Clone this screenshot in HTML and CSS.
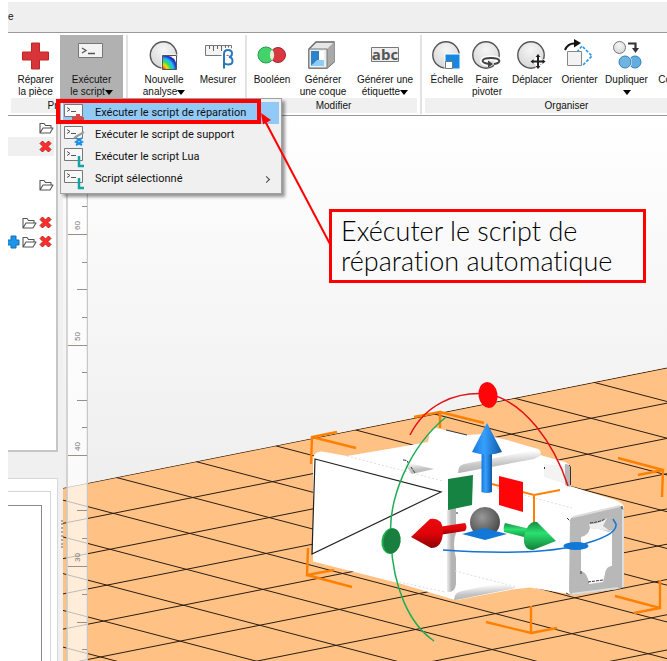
FILE: index.html
```html
<!DOCTYPE html>
<html lang="fr">
<head>
<meta charset="utf-8">
<title>Préparation de pièce</title>
<link rel="stylesheet" href="styles.css">
</head>
<body>
<div class="app">
  <header class="titlebar">e</header>

  <nav class="ribbon" aria-label="Outils">
    <section class="group group-prepare">
      <div class="tools">
        <button class="tool" type="button">
          <svg class="icon" viewBox="0 0 32 32"><path d="M11.500 2h8v9h9v8h-9v9h-8v-9h-9v-8h9z" fill="#d93437" stroke="#b8282b"/></svg>
          <span>Réparer<br>la pièce</span>
        </button>
        <button class="tool active" type="button" aria-expanded="true">
          <svg class="icon" viewBox="0 0 32 32"><path d="M2.500 2.500h24v14h-24z" fill="#f3f3f3" stroke="#777"/><path d="M6 7l4 2.500L6 12M12 12.500h7" fill="none" stroke="#555" stroke-width="1.300"/></svg>
          <span>Exécuter<br>le script<i class="caret"></i></span>
        </button>
      </div>
      <h2 class="group-label">Préparer</h2>
    </section>
    <section class="group group-analyse">
      <div class="tools">
        <button class="tool" type="button">
          <svg class="icon" viewBox="0 0 32 32"><defs><radialGradient id="ball" cx=".5" cy=".3" r=".8"><stop offset="0" stop-color="#f6f6f6"/><stop offset="1" stop-color="#d2d2d2"/></radialGradient><radialGradient id="fan" cx="0" cy="1" r="1.100"><stop offset=".1" stop-color="#f42"/><stop offset=".3" stop-color="#fd0"/><stop offset=".5" stop-color="#3d5"/><stop offset=".7" stop-color="#2bf"/><stop offset=".9" stop-color="#23b"/></radialGradient></defs><circle cx="15.500" cy="14" r="13.200" fill="url(#ball)" stroke="#555" stroke-width="1.400"/><path d="M14.500 14.500h14v14h-14z" fill="#fff" stroke="#fff" stroke-width="2"/><path d="M14.500 28.500v-14h4q9 1 10 10v4z" fill="url(#fan)"/><path d="M14.500 14.500h14v14h-14z" fill="none" stroke="#555"/></svg>
          <span>Nouvelle<br>analyse<i class="caret"></i></span>
        </button>
        <button class="tool" type="button">
          <svg class="icon" viewBox="0 0 32 32"><path d="M3.500 4.500h26v10h-26z" fill="#f3f3f3" stroke="#777"/><path d="M7.500 5v3M11.500 5v5M15.500 5v3M19.500 5v5M23.500 5v3M26.500 5v4" stroke="#666"/><path d="M22 27.500V13q0-4 4-4t4 3.500q0 3-3 3.500 3.500.5 3.500 4t-4.500 3.500q-2.500 0-4-1.500" fill="none" stroke="#fff" stroke-width="5"/><path d="M22 27.500V13q0-4 4-4t4 3.500q0 3-3 3.500 3.500.5 3.500 4t-4.500 3.500q-2.500 0-4-1.500" fill="none" stroke="#2b78b8" stroke-width="2"/></svg>
          <span>Mesurer</span>
        </button>
      </div>
      <div class="group-label"></div>
    </section>
    <section class="group group-modify">
      <div class="tools">
        <button class="tool" type="button">
          <svg class="icon" viewBox="0 0 32 32"><circle cx="22" cy="14" r="7.500" fill="#d93840" stroke="#a8282f"/><circle cx="10" cy="14" r="8" fill="#43d36b" stroke="#2a9a4b"/><path d="M16 8.500a8 8 0 0 1 0 11 8 8 0 0 1 0-11" fill="#efe9d5"/></svg>
          <span>Booléen</span>
        </button>
        <button class="tool" type="button">
          <svg class="icon" viewBox="0 0 32 32"><path d="M2 8l7-7h18v20l-7 6H2z" fill="#e6e6e6" stroke="#666" stroke-width="1.400"/><path d="M20 8l7-7v20l-7 6z" fill="#a9a9a9"/><path d="M2 8h18v19H2z" fill="#ededed" stroke="#777"/><path d="M4 10h13v15H4z" fill="#fff"/><path d="M4 10h8v9l-8 6z" fill="#2f83c7"/><path d="M4 25l6-6h7v6z" fill="#8dccfb"/></svg>
          <span>Générer<br>une coque</span>
        </button>
        <button class="tool" type="button">
          <svg class="icon" viewBox="0 0 32 32"><path d="M2.500 6.500h27v14h-27z" fill="#eee" stroke="#777"/><text class="abc" x="16" y="19" text-anchor="middle">abc</text></svg>
          <span>Générer une<br>étiquette<i class="caret"></i></span>
        </button>
      </div>
      <h2 class="group-label">Modifier</h2>
    </section>
    <section class="group group-arrange">
      <div class="tools">
        <button class="tool" type="button">
          <svg class="icon" viewBox="0 0 32 32"><circle cx="15" cy="14" r="13.200" fill="url(#ball)" stroke="#555" stroke-width="1.400"/><path d="M14 13h15v15H14z" fill="#1688e0" stroke="#fff"/><path d="M14.500 20.500h7v7h-7z" fill="#fff" stroke="#777"/></svg>
          <span>Échelle</span>
        </button>
        <button class="tool" type="button">
          <svg class="icon" viewBox="0 0 32 32"><circle cx="15" cy="14" r="13.200" fill="url(#ball)" stroke="#555" stroke-width="1.400"/><path d="M17 23c-8-1-7-6 3-6s11 5 3 6" fill="none" stroke="#fff" stroke-width="5"/><path d="M19 23c-11-1-9-6 1-6s11 5 3 6" fill="none" stroke="#444" stroke-width="2"/><path d="M17 19.500l5 3.500-5 3.500z" fill="#444"/></svg>
          <span>Faire<br>pivoter</span>
        </button>
        <button class="tool" type="button">
          <svg class="icon" viewBox="0 0 32 32"><circle cx="15" cy="14" r="13.200" fill="url(#ball)" stroke="#555" stroke-width="1.400"/><path d="M22 14v13M15.500 20.500h13" stroke="#fff" stroke-width="5"/><path d="M22 15v11M16.500 20.500h11" stroke="#222" stroke-width="2"/><path d="M19.500 16l2.500-3 2.500 3zM19.500 25l2.500 3 2.500-3zM17.500 18l-3 2.500 3 2.500zM26.500 18l3 2.500-3 2.500z" fill="#222"/></svg>
          <span>Déplacer</span>
        </button>
        <button class="tool" type="button">
          <svg class="icon" viewBox="0 0 32 32"><path d="M13 11l5-6 10 10-10 10" fill="none" stroke="#239bea" stroke-width="1.600" stroke-dasharray="3 1.500"/><path d="M3.500 10.500h14v14h-14z" fill="#f3f3f3" stroke="#888"/><path d="M1 9Q4 2 11 2.500" fill="none" stroke="#111" stroke-width="2"/><path d="M10-2l7 4-7 4.500z" fill="#111"/></svg>
          <span>Orienter</span>
        </button>
        <button class="tool" type="button">
          <svg class="icon" viewBox="0 0 32 32"><circle cx="8.500" cy="6.500" r="6" fill="url(#ball)" stroke="#777"/><path d="M17 2.500h7.500V7" fill="none" stroke="#333" stroke-width="2.200"/><path d="M21 7h7l-3.500 5z" fill="#333"/><circle cx="24" cy="21" r="6" fill="#62aee2" stroke="#347fae"/><circle cx="14" cy="21" r="7" fill="#fff"/><circle cx="14" cy="21" r="6" fill="#70b4e4" stroke="#347fae"/></svg>
          <span>Dupliquer<br><i class="caret"></i></span>
        </button>
        <button class="tool" type="button">
          <span class="icon"></span>
          <span>Copier</span>
        </button>
      </div>
      <h2 class="group-label">Organiser</h2>
    </section>
  </nav>

  <main class="workspace">
    <aside class="side">
      <svg class="defs" aria-hidden="true">
        <symbol id="folder" viewBox="0 0 16 16"><path d="M2 13V3.500h4l1.500 2H13V8M2 13l3-5h10l-3 5z" fill="#fff" stroke="#555" stroke-width="1.100" stroke-linejoin="round"/></symbol>
        <symbol id="cross" viewBox="0 0 16 16"><path d="M2 4.500L4.500 2l3 3 3-3L13 4.500l-3 3 3 3-2.500 2.500-3-3-3 3L2 10.500l3-3z" fill="#fb2d2d" stroke="#c62020"/></symbol>
        <symbol id="plus" viewBox="0 0 16 16"><path d="M7 2h5v4h3v5h-3v3H7v-3H3V6h4z" fill="#1c94ea" stroke="#1670b4"/></symbol>
        <symbol id="script" viewBox="0 0 22 22"><path d="M1.500 2.500h18v12h-18z" fill="#f8f8f8" stroke="#777"/><path d="M4 5.500l3 2L4 9.500M8 9.500h5" fill="none" stroke="#555"/></symbol>
      </svg>
      <ul class="parts">
        <li><svg><use href="#folder"/></svg></li>
        <li class="selected"><svg><use href="#cross"/></svg></li>
        <li></li>
        <li><svg><use href="#folder"/></svg></li>
        <li></li>
        <li><svg><use href="#folder"/></svg><svg><use href="#cross"/></svg></li>
        <li><svg><use href="#plus"/></svg><svg><use href="#folder"/></svg><svg><use href="#cross"/></svg></li>
      </ul>
      <div class="details"><div class="details-inner"><div class="details-box"></div></div></div>
    </aside>
    <div class="splitter"></div>
    <div class="scene">
      <svg class="view" viewBox="63 116 604 545" preserveAspectRatio="xMinYMin slice" role="img" aria-label="Vue 3D de la pièce">
        <defs>
          <linearGradient id="sky" x1="0" y1="0" x2="0" y2="1"><stop offset="0" stop-color="#fff"/><stop offset=".65" stop-color="#efefef"/></linearGradient>
          <clipPath id="floor"><path d="M63 488L667 367.500V661H63z"/></clipPath>
          <linearGradient id="blue"><stop offset="0" stop-color="#1678dc"/><stop offset=".4" stop-color="#36a0ff"/><stop offset="1" stop-color="#1058a8"/></linearGradient>
          <linearGradient id="red" x1="0" y1="0" x2="0" y2="1"><stop offset="0" stop-color="#e80c10"/><stop offset=".5" stop-color="#e00408"/><stop offset="1" stop-color="#8c0004"/></linearGradient>
          <linearGradient id="green" x1="0" y1="0" x2="0" y2="1"><stop offset="0" stop-color="#168c44"/><stop offset=".4" stop-color="#2ce070"/><stop offset="1" stop-color="#128038"/></linearGradient>
          <radialGradient id="sphere" cx=".4" cy=".35" r=".7"><stop offset="0" stop-color="#999"/><stop offset="1" stop-color="#444"/></radialGradient>
          <linearGradient id="bevel" x1="0" y1="0" x2=".2" y2="1"><stop offset=".2" stop-color="#fff"/><stop offset=".7" stop-color="#c4c4c4"/><stop offset="1" stop-color="#b4b4b4"/></linearGradient>
          <linearGradient id="edge"><stop offset="0" stop-color="#eee"/><stop offset=".5" stop-color="#b4b4b4"/></linearGradient>
        </defs>
        <path d="M63 116h604v545H63z" fill="url(#sky)"/>
        <g clip-path="url(#floor)">
          <path d="M63 116h604v545H63z" fill="#ffc184"/>
          <path fill="none" stroke="#2a1c10" d="M37 493.300l716.400-142.600M33.700 529.200l716.400-142.600M30.500 565.100l716.400-142.600M27.300 601l716.400-142.600M24.100 636.900l716.400-142.600M20.900 672.800l716.400-142.600M17.700 708.700l716.400-142.600M14.500 744.600l716.400-142.600M11.300 780.500l716.400-142.600M116.500 477.500l764 200.500M196.100 461.600l764 200.500M275.700 445.800l764 200.500M355.300 429.900l764 200.500M434.900 414.100l764 200.500M514.500 398.200l764 200.500M594.100 382.400l764 200.500M36.900 493.300l764 200.500M-42.700 509.200l764 200.500M-122.300 525l764 200.500M-201.900 540.900l764 200.500M-281.500 556.700l764 200.500"/>
        </g>
        <g fill="none" stroke="#ff8000" stroke-width="2.400">
          <path d="M337 432l-25 5-1 27M312 437l44 11M414 417l26-5v16M440 412l44 11M308 548l-1 27 27-5M307 575l45 12M618 458l45 12-1 27M663 470l-25 5M615 596l45 12v-28M660 608l-26 5M486 622l45 11v-27M531 633l26-5"/>
        </g>
        <path fill="#fff" d="M313 459q1-8 9-7.500l25 4.500 53-9 28-5 2-11 6-3 32 7 14-1 25 6 31 9q4 2 2 6l25 7q5 2 5 6v18l45 14q9 3 9 8v74q0 5-7 6.500l-45 6-42-7-18 2-52 10q-5 1-10-1l-50-15-87-22z"/>
        <path d="M400 461l34 8-22 5q-6-9-12-13" fill="url(#bevel)"/>
        <path d="M458 473q0-8 6-9l71-14q6 1 5 6l-6 3-75 14z" fill="url(#bevel)"/>
        <path d="M544 464l21 2v18l-21-7z" fill="#f3f3f3"/>
        <path d="M565 464q5 0 5 5v18l-5-2z" fill="#b8b8b8"/>
        <path d="M569 465q2 1 1.500 5v15M544.500 467v2" fill="none" stroke="#333"/>
        <path d="M447 510q5-7 9-9v32q-4 10 0 25v26q-1 9-9 8z" fill="url(#edge)"/>
        <path d="M454 600q0-8 8-9l37-8 17 5-55 11q-4 1-7 1" fill="url(#bevel)"/>
        <path d="M399 582l46 10M455 571l62 16M347 456l96 25M497 488l75 20" fill="none" stroke="#ddd" stroke-dasharray="2 2"/>
        <path d="M570 521q0-4 6-5l44-10q4 0 4 5v73q0 4-5 5l-47 6q-3-1-3-5z" fill="#b8b8b8"/>
        <path d="M573 517l47-11M623 510v77M572 594l46-6" fill="none" stroke="#ddd" stroke-width="2"/>
        <path d="M581 537q7-1 9-9l9 1 10 3 3-2v36q-6 0-7 8l-2 8-14 2q-1-11-8-13z" fill="#fff"/>
        <path d="M590 528l-1-4q11 0 18-6l-4 8 7 5z" fill="#eee"/>
        <path d="M590 523q10-1 15-4M588 582l15-2M567 518l3 3M566 593l4 2M622 506v3M581 571v3M403 460q6 0 5 4M411 467l4 6M456 513h2" fill="none" stroke="#333" stroke-dasharray="3 1"/>
        <path d="M315 459l126 33-129 62z" fill="none" stroke="#222" stroke-width="1.200"/>
        <path d="M446 430l21 5" stroke="#333"/>
        <path d="M492 484l42 11 26-5M534 495v27" fill="none" stroke="#ff8000" stroke-width="2"/>
        <path d="M410 435C425 405 455 391 488 394M488 394C524 401 554 443 568 486" fill="none" stroke="#e21218" stroke-width="1.500"/>
        <ellipse cx="488" cy="395" rx="9.500" ry="13" transform="rotate(-8 488 395)" fill="#ff0508"/>
        <path d="M446 417C409 447 387 500 391 541C393 587 409 624 434 641" fill="none" stroke="#1dad54" stroke-width="1.500"/>
        <ellipse cx="391" cy="541" rx="9.500" ry="13" transform="rotate(8 391 541)" fill="#1cae50"/>
        <ellipse cx="392" cy="541" rx="8.500" ry="12.500" transform="rotate(8 392 541)" fill="#187f3e"/>
        <circle cx="485" cy="522" r="15" fill="url(#sphere)"/>
        <path d="M462 534l22-6 23 6-22 6z" fill="#1278d8"/>
        <path d="M481.500 450h10.500v42q-5 2-10.500 0z" fill="url(#blue)"/>
        <path d="M487 423l15 29q-14 5-30 0z" fill="url(#blue)"/>
        <path d="M499 476l24 6v30l-24-7z" fill="#ff0508"/>
        <path d="M448 479l25-4-1 30-24 5z" fill="#168342"/>
        <path d="M438 527l27-4q3 4 0 8l-26 4z" fill="url(#red)"/>
        <path d="M411 537l19-18q12-2 13 11 0 18-12 18z" fill="url(#red)"/>
        <path d="M505 523l29 7-2 9-28-7q-1-5 1-9" fill="url(#green)"/>
        <path d="M556 541l-19-19q-9-2-13 15-1 13 9 13z" fill="url(#green)"/>
        <path d="M443 550Q530 556 576 546Q618 536 616 524L613 519" fill="none" stroke="#1474d2" stroke-width="1.500"/>
        <ellipse cx="576" cy="546" rx="12.500" ry="4" fill="#1278d8"/>
      </svg>
      <svg class="ruler" viewBox="66 116 22 545" preserveAspectRatio="xMinYMin slice" aria-label="Règle">
        <path d="M67 116h20v545H67z" fill="#fff" fill-opacity=".7"/>
        <path d="M67 116v545M87.500 116v545" stroke="#c8c8c8" stroke-width="1.500"/>
        <path d="M68 234.500h19M68 345.500h19M68 455.500h19M68 566.500h19M77 289.500h10M77 400.500h10M77 510.500h10M77 622.500h10M82 206.500h5M82 262.500h5M82 317.500h5M82 372.500h5M82 427.500h5M82 538.500h5M82 594.500h5M82 649.500h5" stroke="#9a9084"/>
        <g class="marks"><text transform="translate(80 230) rotate(-90)">60</text><text transform="translate(80 341) rotate(-90)">50</text><text transform="translate(80 451) rotate(-90)">40</text><text transform="translate(80 562) rotate(-90)">30</text></g>
      </svg>
    </div>
  </main>

  <div class="menu" role="menu">
    <button class="menu-item current" type="button" role="menuitem"><svg><use href="#script"/><path d="M13 12h4v3h4v4h-4v3h-4v-3h-4v-4h4z" fill="#d94444"/></svg>Exécuter le script de réparation</button>
    <button class="menu-item" type="button" role="menuitem"><svg><use href="#script"/><path d="M11 14l9-5M12 13l9-5" stroke="#999" stroke-width="2"/><path d="M13 14l6 4-6 3M19 14l-6 4 6 3" fill="none" stroke="#1e8fe5" stroke-width="2"/></svg>Exécuter le script de support</button>
    <button class="menu-item" type="button" role="menuitem"><svg><use href="#script"/><path d="M16 10v10h5" fill="none" stroke="#16a3a3" stroke-width="2.500"/></svg>Exécuter le script Lua</button>
    <button class="menu-item" type="button" role="menuitem"><svg><use href="#script"/><path d="M16 10v10h5" fill="none" stroke="#16a3a3" stroke-width="2.500"/></svg>Script sélectionné<span class="more"></span></button>
  </div>

  <div class="highlight"></div>
  <svg class="pointer" viewBox="0 0 72 134" aria-hidden="true"><path d="M70 132L5 9" stroke="red" stroke-width="2"/><path d="M1 1l10 7-8 4.500z" fill="red"/></svg>
  <p class="callout">Exécuter le script de réparation automatique</p>
</div>
</body>
</html>
```
FILE: styles.css
```css
* { box-sizing: border-box; }

body {
  margin: 0;
  background: #fff;
  color: #111;
  font: 10px/12px "Liberation Sans", Arial, sans-serif;
}

button {
  border: 0;
  padding: 0;
  background: none;
  color: inherit;
  font: inherit;
}

.app {
  position: relative;
  display: flex;
  flex-direction: column;
  min-height: 100vh;
  padding: 2px 0 0 8px;
  overflow: hidden;
}

.titlebar {
  height: 31px;
  border-bottom: 1px solid #999;
  background: #efefef;
  line-height: 30px;
}

.ribbon {
  display: flex;
  height: 83px;
  padding-top: 2px;
  border-bottom: 1px solid #999;
  overflow: hidden;
}

.group {
  flex: none;
  display: flex;
  flex-direction: column;
  height: 79px;
  padding: 0 3px;
  border-right: 2px solid #e2e2e2;
}

.tools {
  display: grid;
  grid-auto-flow: column;
  justify-content: start;
  height: 63px;
}

.group-prepare { width: 120px; }
.group-prepare .tools { grid-template-columns: 49px 63px; }
.group-analyse { width: 119px; }
.group-analyse .tools { grid-template-columns: 54px 50px; column-gap: 2px; padding-left: 6px; }
.group-modify { width: 175px; }
.group-modify .tools { grid-template-columns: 44px 58px 66px; }
.group-arrange { width: 291px; }
.group-arrange .tools { grid-template-columns: 44px 36px 54px 41px 53px 40px; }

.tool {
  display: flex;
  flex-direction: column;
  align-items: center;
  gap: 1px;
  padding-top: 6px;
  white-space: nowrap;
}

.tool.active { background: #b1b1b1; }

.icon {
  flex: none;
  width: 32px;
  height: 32px;
  overflow: visible;
}

.abc { font: bold 15px "Open Sans", sans-serif; fill: #555; }

.caret {
  display: inline-block;
  border: 4px solid transparent;
  border-top: 5px solid #000;
  border-bottom: 0;
}

.group-label {
  height: 15px;
  margin: 0;
  background: #f0f0f0;
  font: inherit;
  line-height: 15px;
  text-align: center;
}

.workspace {
  display: flex;
  flex: 1;
  min-height: 540px;
  background: #f0f0f0;
}

.side {
  display: flex;
  flex-direction: column;
  width: 50px;
}

.defs { display: none; }

.parts {
  height: 336px;
  margin: 0 0 26px;
  padding: 2px 2px 0 0;
  border: solid #c6c6c9;
  border-width: 0 2px 2px 0;
  background: #fff;
  list-style: none;
  overflow: hidden;
}

.parts li {
  display: flex;
  justify-content: flex-end;
  align-items: center;
  gap: 1px;
  height: 19px;
}

.parts li.selected { background: #f0f0f0; }

.parts svg {
  flex: none;
  width: 16px;
  height: 16px;
}

.details {
  flex: 1;
  display: flex;
  padding: 12px 6px 0 0;
  border: solid #d8d8d8;
  border-width: 1px 1px 0 0;
  background: #fff;
}

.details-inner {
  flex: 1;
  display: flex;
  padding: 13px 8px 0 0;
  border: solid #d4d4d4;
  border-width: 1px 1px 0 0;
}

.details-box {
  flex: 1;
  border: solid #888c92;
  border-width: 1px 1px 0 0;
}

.splitter {
  display: flex;
  align-items: flex-end;
  justify-content: flex-end;
  width: 5px;
  padding-bottom: 113px;
}

.splitter::after {
  content: "";
  height: 28px;
  border-right: 2px dotted #aaa;
}

.scene {
  position: relative;
  flex: 1;
  overflow: hidden;
}

.view {
  position: absolute;
  width: 100%;
  height: 100%;
}

.ruler {
  position: absolute;
  left: 3px;
  width: 22px;
  height: 100%;
}

.marks { font: 8px "Liberation Sans", sans-serif; fill: #777; }

.menu {
  position: absolute;
  top: 98px;
  left: 60px;
  width: 222px;
  padding: 3px 2px;
  border: 1px solid #a0a0a0;
  background: #f0f0f0;
  box-shadow: 3px 3px 3px #0006;
}

.menu-item {
  display: flex;
  align-items: center;
  gap: 10px;
  width: 100%;
  height: 22px;
  font: 11px/16px Roboto, sans-serif;
  white-space: nowrap;
}

.menu-item.current { background: #91c9f7; }
.menu-item svg { width: 22px; height: 22px; }

.more {
  width: 5px;
  height: 5px;
  margin: 0 10px 0 auto;
  border: solid #444;
  border-width: 1px 1px 0 0;
  transform: rotate(45deg);
}

.highlight {
  position: absolute;
  top: 99px;
  left: 56px;
  width: 205px;
  height: 25px;
  border: 4px solid #f00;
}

.pointer {
  position: absolute;
  top: 112px;
  left: 260px;
  width: 72px;
  height: 134px;
}

.callout {
  position: absolute;
  top: 209px;
  left: 329px;
  width: 317px;
  margin: 0;
  padding: 4px 9px;
  border: 3px solid #f00;
  background: #fafafa;
  color: #000;
  font: 300 27px/30px Lato, sans-serif;
  font-variant-ligatures: none;
}
```
